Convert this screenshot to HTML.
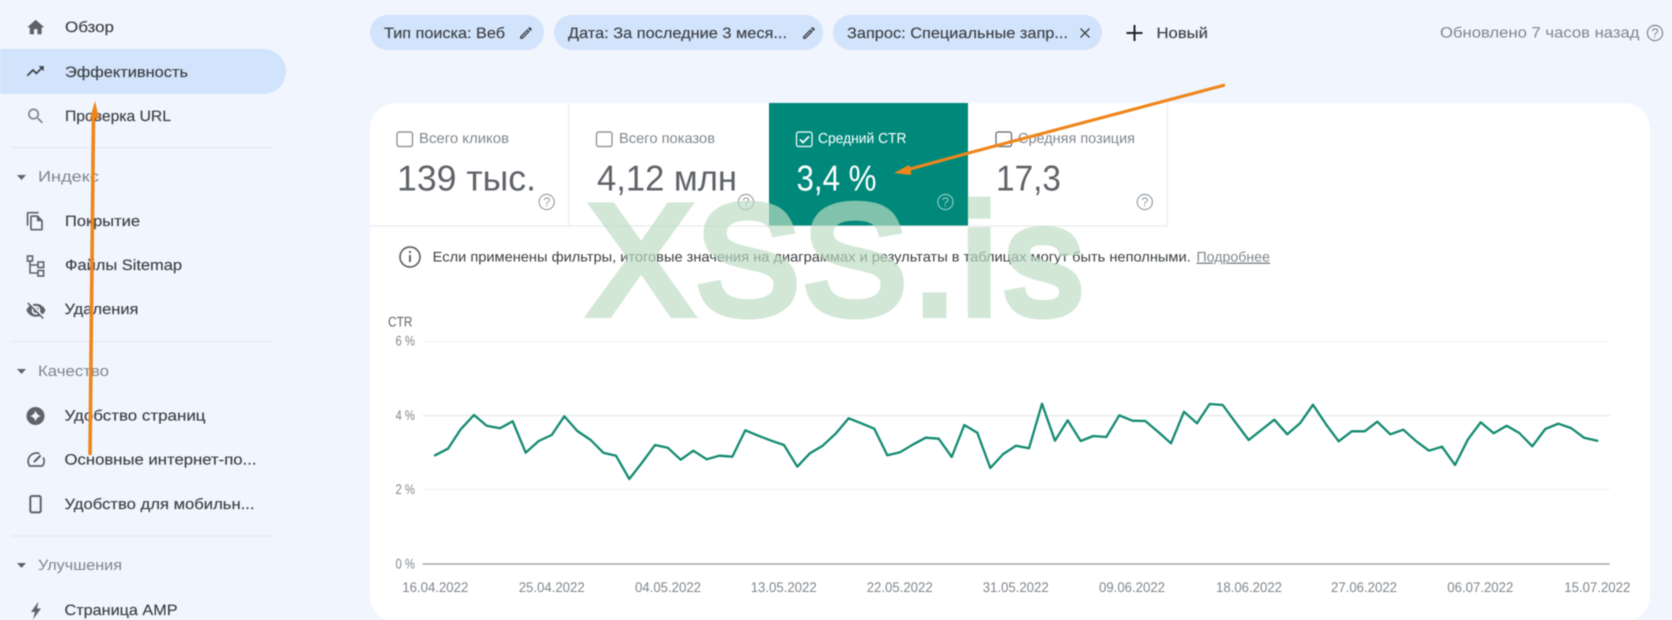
<!DOCTYPE html>
<html lang="ru"><head><meta charset="utf-8"><title>Эффективность</title>
<style>
html,body{margin:0;padding:0;width:1672px;height:620px;overflow:hidden;background:#f1f5fe}
svg{display:block;filter:blur(.45px)}
text{font-family:"Liberation Sans",sans-serif;text-rendering:geometricPrecision}
.n{font-size:15px;fill:#3c4043;stroke:#3c4043;stroke-width:.15px}
.h{font-size:15px;fill:#80868b}
.l{font-size:14.5px;fill:#80868b}
.v{font-size:36px;fill:#5f6368}
.c{font-size:14px;fill:#80868b}
.q{font-size:13px;text-anchor:middle}
.i{fill:#5f6368}
</style></head><body>
<svg xmlns="http://www.w3.org/2000/svg" width="1672" height="620" viewBox="0 0 1672 620">
<rect width="1672" height="620" fill="#f1f5fe"/>

<!-- sidebar -->
<rect x="-30" y="49" width="316" height="45" rx="22.5" fill="#d2e3fc"/>
<g stroke="#e3e6ea" stroke-width="1"><path d="M11 147.5H272M11 341.5H272M11 536H272"/></g>

<path class="i" transform="translate(25.5 17.2) scale(.85)" d="M10 20v-6h4v6h5v-8h3L12 3 2 12h3v8z"/>
<path fill="#3c4043" transform="translate(25 61) scale(.85)" d="M16 6l2.29 2.29-4.88 4.88-4-4L2 16.59 3.41 18l6-6 4 4 6.3-6.29L22 12V6z"/>
<path fill="#80868b" transform="translate(25.5 106) scale(.85)" d="M15.5 14h-.79l-.28-.27C15.41 12.59 16 11.11 16 9.5 16 5.91 13.09 3 9.5 3S3 5.91 3 9.5 5.91 16 9.5 16c1.61 0 3.09-.59 4.23-1.57l.27.28v.79l5 4.99L20.49 19l-4.99-5zm-6 0C7.01 14 5 11.99 5 9.5S7.01 5 9.5 5 14 7.01 14 9.5 11.99 14 9.5 14z"/>
<path class="i" transform="translate(25 211) scale(.85)" d="M16 1H4c-1.1 0-2 .9-2 2v14h2V3h12V1zm-1 4H8c-1.1 0-1.99.9-1.99 2L6 21c0 1.1.89 2 1.99 2H19c1.1 0 2-.9 2-2V11l-6-6zM8 21V7h6v5h5v9H8z"/>
<g fill="none" stroke="#5f6368" stroke-width="1.6">
<rect x="27.5" y="256" width="5" height="5"/><rect x="38" y="262" width="5.6" height="5.5"/><rect x="38" y="270.5" width="5.6" height="5.5"/>
<path d="M30 261V273H38M30 265H38"/>
</g>
<path class="i" transform="translate(25.5 299.8) scale(.87)" d="M12 7c2.76 0 5 2.24 5 5 0 .65-.13 1.26-.36 1.83l2.92 2.92c1.51-1.26 2.7-2.89 3.43-4.75-1.73-4.39-6-7.5-11-7.5-1.4 0-2.74.25-3.98.7l2.16 2.16C10.74 7.13 11.35 7 12 7zM2 4.27l2.28 2.28.46.46C3.08 8.3 1.78 10.02 1 12c1.73 4.39 6 7.5 11 7.5 1.55 0 3.03-.3 4.38-.84l.42.42L19.73 22 21 20.73 3.27 3 2 4.27zM7.53 9.8l1.55 1.55c-.05.21-.08.43-.08.65 0 1.66 1.34 3 3 3 .22 0 .44-.03.65-.08l1.55 1.55c-.67.33-1.41.53-2.2.53-2.76 0-5-2.24-5-5 0-.79.2-1.53.53-2.2zm4.31-.78l3.15 3.15.02-.16c0-1.66-1.34-3-3-3l-.17.01z"/>
<circle cx="35.5" cy="416" r="9" fill="#5f6368"/>
<path fill="#f1f5fe" d="M35.5 410.5Q36.5 415 41 416Q36.5 417 35.5 421.5Q34.5 417 30 416Q34.5 415 35.5 410.5Z"/>
<g fill="none" stroke="#5f6368" stroke-width="1.7" stroke-linejoin="round" stroke-linecap="round">
<path d="M39 453.4A8.3 8.3 0 0 0 29.6 466H42.4A8.3 8.3 0 0 0 43.5 458"/>
<path stroke-width="2.2" d="M34.5 461.5L40 456"/>
</g>
<rect x="30.3" y="496" width="10.4" height="16.4" rx="1.6" fill="none" stroke="#5f6368" stroke-width="2"/>
<path class="i" d="M38.5 601.5L31 612H35L33 619.5L41 608.5H37Z"/>

<g class="i">
<path d="M17 175H26L21.5 180Z"/><path d="M17 369H26L21.5 374Z"/><path d="M17 563H26L21.5 568Z"/>
</g>

<text class="n" x="65" y="32" textLength="49" lengthAdjust="spacingAndGlyphs">Обзор</text>
<text class="n" x="65" y="77" textLength="123" lengthAdjust="spacingAndGlyphs">Эффективность</text>
<text class="n" x="65" y="121" textLength="106" lengthAdjust="spacingAndGlyphs">Проверка URL</text>
<text class="h" x="38" y="181.5" textLength="61" lengthAdjust="spacingAndGlyphs">Индекс</text>
<text class="n" x="65" y="226" textLength="75" lengthAdjust="spacingAndGlyphs">Покрытие</text>
<text class="n" x="65" y="270" textLength="117" lengthAdjust="spacingAndGlyphs">Файлы Sitemap</text>
<text class="n" x="64.5" y="314" textLength="74" lengthAdjust="spacingAndGlyphs">Удаления</text>
<text class="h" x="38" y="376" textLength="71" lengthAdjust="spacingAndGlyphs">Качество</text>
<text class="n" x="64.5" y="420.5" textLength="141" lengthAdjust="spacingAndGlyphs">Удобство страниц</text>
<text class="n" x="64.5" y="464.5" textLength="192" lengthAdjust="spacingAndGlyphs">Основные интернет-по...</text>
<text class="n" x="64.5" y="509" textLength="190" lengthAdjust="spacingAndGlyphs">Удобство для мобильн...</text>
<text class="h" x="38" y="570" textLength="84" lengthAdjust="spacingAndGlyphs">Улучшения</text>
<text class="n" x="64.5" y="615" textLength="113" lengthAdjust="spacingAndGlyphs">Страница AMP</text>

<!-- chips -->
<rect x="370" y="15" width="174" height="35" rx="17.5" fill="#d2e3fc"/>
<rect x="554" y="15" width="269" height="35" rx="17.5" fill="#d2e3fc"/>
<rect x="833" y="15" width="269" height="35" rx="17.5" fill="#d2e3fc"/>
<text class="n" x="384" y="38" textLength="121" lengthAdjust="spacingAndGlyphs">Тип поиска: Веб</text>
<text class="n" x="568" y="38" textLength="219" lengthAdjust="spacingAndGlyphs">Дата: За последние 3 меся...</text>
<text class="n" x="847" y="38" textLength="221" lengthAdjust="spacingAndGlyphs">Запрос: Специальные запр...</text>
<path fill="#3c4043" transform="translate(518.2 25.2) scale(.65)" d="M3 17.25V21h3.75L17.81 9.94l-3.75-3.75L3 17.25zM5.92 19H5v-.92l9.06-9.06.92.92L5.92 19zM20.71 5.63l-2.34-2.34c-.2-.2-.45-.29-.71-.29s-.51.1-.7.29l-1.83 1.83 3.75 3.75 1.83-1.83c.39-.39.39-1.02 0-1.41z"/>
<path fill="#3c4043" transform="translate(801.2 25.2) scale(.65)" d="M3 17.25V21h3.75L17.81 9.94l-3.75-3.75L3 17.25zM5.92 19H5v-.92l9.06-9.06.92.92L5.92 19zM20.71 5.63l-2.34-2.34c-.2-.2-.45-.29-.71-.29s-.51.1-.7.29l-1.83 1.83 3.75 3.75 1.83-1.83c.39-.39.39-1.02 0-1.41z"/>
<path d="M1080.5 28.5L1089.5 37.5M1089.5 28.5L1080.5 37.5" stroke="#3c4043" stroke-width="1.3" fill="none"/>
<path d="M1126.5 33H1142.5M1134.5 25V41" stroke="#202124" stroke-width="2" fill="none"/>
<text class="n" x="1156.5" y="38" textLength="51.5" lengthAdjust="spacingAndGlyphs">Новый</text>
<text class="h" x="1440" y="37.5" textLength="199.5" lengthAdjust="spacingAndGlyphs">Обновлено 7 часов назад</text>
<circle cx="1655" cy="33" r="7.6" fill="none" stroke="#80868b" stroke-width="1.2"/>
<text class="q" x="1655" y="37.5" fill="#80868b">?</text>

<!-- card -->
<rect x="370" y="103" width="1280" height="519" rx="26" fill="#fff"/>
<rect x="769" y="103" width="199" height="123" fill="#00897b"/>
<path d="M370 226H1167.5V103M568.5 103V226" fill="none" stroke="#e5e7ea" stroke-width="1"/>

<g fill="none" stroke="#80868b" stroke-width="1.2">
<rect x="397" y="132" width="15.5" height="14.5" rx="2"/>
<rect x="596.5" y="132" width="15.5" height="14.5" rx="2"/>
<rect x="996" y="132" width="15.5" height="14.5" rx="2" stroke="#5f6368"/>
</g>
<rect x="796.5" y="132" width="15.5" height="14.5" rx="2" fill="none" stroke="#fff" stroke-width="1.2"/>
<path d="M800 139.5L803 142.5L809 136.5" fill="none" stroke="#fff" stroke-width="1.8"/>

<text class="l" x="419" y="143" textLength="90" lengthAdjust="spacingAndGlyphs">Всего кликов</text>
<text class="l" x="619" y="143" textLength="96" lengthAdjust="spacingAndGlyphs">Всего показов</text>
<text class="l" x="818" y="143" textLength="88.5" lengthAdjust="spacingAndGlyphs" style="fill:#fff">Средний CTR</text>
<text class="l" x="1018" y="143" textLength="117" lengthAdjust="spacingAndGlyphs">Средняя позиция</text>
<text class="v" x="397" y="190.5" textLength="139" lengthAdjust="spacingAndGlyphs">139 тыс.</text>
<text class="v" x="597" y="190.5" textLength="140" lengthAdjust="spacingAndGlyphs">4,12 млн</text>
<text class="v" x="796.5" y="190.5" textLength="80" lengthAdjust="spacingAndGlyphs" style="fill:#fff">3,4 %</text>
<text class="v" x="996" y="190.5" textLength="65" lengthAdjust="spacingAndGlyphs">17,3</text>

<g fill="none" stroke="#9aa0a6" stroke-width="1.2">
<circle cx="546.7" cy="202" r="7.6"/><circle cx="746" cy="202" r="7.6"/><circle cx="1144.8" cy="202" r="7.6"/>
</g>
<circle cx="945.4" cy="202" r="7.6" fill="none" stroke="#8cc9c0" stroke-width="1.2"/>
<text class="q" x="546.7" y="206.5" fill="#9aa0a6">?</text>
<text class="q" x="746" y="206.5" fill="#9aa0a6">?</text>
<text class="q" x="945.4" y="206.5" fill="#8cc9c0">?</text>
<text class="q" x="1144.8" y="206.5" fill="#9aa0a6">?</text>

<!-- info -->
<circle cx="410" cy="257" r="10" fill="none" stroke="#5f6368" stroke-width="1.7"/>
<path d="M409 251h2v2h-2zM409 255h2v7h-2z" fill="#5f6368"/>
<text x="432.7" y="261.5" font-size="14" fill="#3c4043" textLength="758" lengthAdjust="spacingAndGlyphs">Если применены фильтры, итоговые значения на диаграммах и результаты в таблицах могут быть неполными.</text>
<text x="1196.5" y="261.5" font-size="14" fill="#80868b" textLength="73.5" lengthAdjust="spacingAndGlyphs" text-decoration="underline">Подробнее</text>

<!-- chart -->
<path d="M422.5 341.5H1610M422.5 489.5H1610" stroke="#f0f1f3" stroke-width="1" fill="none"/>
<path d="M422.5 415.7H1610" stroke="#e8eaed" stroke-width="1.3" fill="none"/>
<path d="M422.5 564H1610" stroke="#a8acb1" stroke-width="1.6" fill="none"/>
<text class="c" x="388" y="326.5" textLength="24.5" lengthAdjust="spacingAndGlyphs" style="fill:#5f6368">CTR</text>
<text class="c" x="395.5" y="345.5" textLength="19.5" lengthAdjust="spacingAndGlyphs">6 %</text>
<text class="c" x="395.5" y="420" textLength="19.5" lengthAdjust="spacingAndGlyphs">4 %</text>
<text class="c" x="395.5" y="494" textLength="19.5" lengthAdjust="spacingAndGlyphs">2 %</text>
<text class="c" x="395.5" y="568.3" textLength="19.5" lengthAdjust="spacingAndGlyphs">0 %</text>
<g>
<text class="c" x="402.3" y="592" textLength="66" lengthAdjust="spacingAndGlyphs">16.04.2022</text>
<text class="c" x="518.7" y="592" textLength="66" lengthAdjust="spacingAndGlyphs">25.04.2022</text>
<text class="c" x="635" y="592" textLength="66" lengthAdjust="spacingAndGlyphs">04.05.2022</text>
<text class="c" x="750.7" y="592" textLength="66" lengthAdjust="spacingAndGlyphs">13.05.2022</text>
<text class="c" x="866.7" y="592" textLength="66" lengthAdjust="spacingAndGlyphs">22.05.2022</text>
<text class="c" x="982.7" y="592" textLength="66" lengthAdjust="spacingAndGlyphs">31.05.2022</text>
<text class="c" x="1099" y="592" textLength="66" lengthAdjust="spacingAndGlyphs">09.06.2022</text>
<text class="c" x="1216" y="592" textLength="66" lengthAdjust="spacingAndGlyphs">18.06.2022</text>
<text class="c" x="1331" y="592" textLength="66" lengthAdjust="spacingAndGlyphs">27.06.2022</text>
<text class="c" x="1447.3" y="592" textLength="66" lengthAdjust="spacingAndGlyphs">06.07.2022</text>
<text class="c" x="1564.3" y="592" textLength="66" lengthAdjust="spacingAndGlyphs">15.07.2022</text>
</g>
<polyline fill="none" stroke="#138a72" stroke-width="2.3" stroke-linejoin="round" stroke-linecap="round" points="435,455.3 448,448.7 460.7,429.3 474,415 486.7,425.7 500,428.3 512.7,421.3 525.7,452.7 538.7,441 551.7,435 564.3,416.3 577.3,431 590.7,440 603.3,452.7 616,455.7 629.3,479 642,462.7 655,445 667.7,447.7 680.7,459.7 693.3,450.7 706.7,459.3 719.3,455.7 732.3,456.7 745.3,430.3 758.3,435.7 771.3,440.7 784,445 797.3,466.7 810,453.2 822.7,445.7 836,433.3 848.7,418.3 861.3,423.3 874.3,428.7 887.3,455.3 900,452.3 912.7,444.7 925.7,437.7 938.7,438.7 951.7,457 964.3,425 977.3,432.7 990.3,468 1003.3,454 1016,445.7 1029,448.3 1042,403.7 1055,440.7 1067.7,420.3 1080.7,441 1093.3,436 1106.3,437 1119.3,415.3 1132.3,420.7 1145.3,421 1158.3,432 1171,443.3 1184,411.7 1197,423.3 1209.7,404 1222.7,405 1235.7,422.7 1248.7,440 1261.3,430 1274.3,419.7 1287.3,434.3 1300,423.3 1313,404.7 1326,424.3 1338.7,441.3 1351.7,431.3 1364.7,431.3 1377.3,421.7 1390.3,434.3 1403.3,429.7 1416.3,441.3 1429,450.7 1442,446.7 1455,465 1468,439.3 1480.7,422.3 1493.7,433.3 1506.7,425.7 1519.3,433 1532.3,446.3 1545.3,429 1558.3,423.7 1571,428 1584,437.7 1597.3,440.7"/>

<!-- watermark -->
<g opacity=".68">
<text x="589 696 803 913 962 1005" y="313.5" font-size="155" fill="rgb(189,221,195)" stroke="rgb(189,221,195)" stroke-width="9">XSS.is</text>
</g>

<!-- arrows -->
<path d="M90 455L93.5 116" stroke="#ee861b" stroke-width="3.6" fill="none"/>
<path d="M95 101L99.5 120L94 117L89.5 120Z" fill="#ee861b"/>
<path d="M1225 85L968.7 153L910 169" stroke="#ee861b" stroke-width="3.1" fill="none"/>
<path d="M894 173L909 165L911 169L911 175Z" fill="#ee861b"/>
</svg>
</body></html>
